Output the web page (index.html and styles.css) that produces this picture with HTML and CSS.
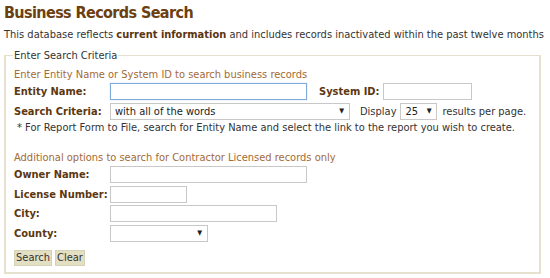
FILE: index.html
```html
<!DOCTYPE html>
<html>
<head>
<meta charset="utf-8">
<link rel="stylesheet" href="styles.css">
</head>
<body>
<div class="page">
  <h1 class="title">Business Records Search</h1>
  <p class="intro">This database reflects <b>current information</b> and includes records inactivated within the past twelve months</p>
  <fieldset class="criteria">
    <legend>Enter Search Criteria</legend>
    <div class="hint">Enter Entity Name or System ID to search business records</div>
    <div class="row">
      <label class="lbl">Entity Name:</label>
      <input class="inp inp-name focus" type="text">
      <label class="lbl lbl-sys">System ID:</label>
      <input class="inp inp-sys" type="text">
    </div>
    <div class="row">
      <label class="lbl">Search Criteria:</label>
      <div class="sel sel-crit"><span>with all of the words</span><i>&#9660;</i></div>
      <span class="display">Display</span>
      <div class="sel sel-num"><span>25</span><i>&#9660;</i></div>
      <span class="per">results per page.</span>
    </div>
    <div class="note">* For Report Form to File, search for Entity Name and select the link to the report you wish to create.</div>
    <div class="hint hint2">Additional options to search for Contractor Licensed records only</div>
    <div class="row">
      <label class="lbl">Owner Name:</label>
      <input class="inp inp-name" type="text">
    </div>
    <div class="row">
      <label class="lbl">License Number:</label>
      <input class="inp inp-lic" type="text">
    </div>
    <div class="row">
      <label class="lbl">City:</label>
      <input class="inp inp-city" type="text">
    </div>
    <div class="row">
      <label class="lbl">County:</label>
      <div class="sel sel-county"><span></span><i>&#9660;</i></div>
    </div>
    <div class="buttons">
      <button class="btn">Search</button><button class="btn">Clear</button>
    </div>
  </fieldset>
</div>
</body>
</html>
```
FILE: styles.css
```css
* { box-sizing: border-box; }
body {
  margin: 0;
  background: #fff;
  font-family: "DejaVu Sans Condensed", "DejaVu Sans", Verdana, sans-serif;
  font-size: 11px;
  color: #333;
}
.page { padding: 3px 4px 0 4px; width: 550px; }
.title {
  margin: 0;
  font-size: 16px;
  font-weight: bold;
  letter-spacing: -0.6px;
  color: #6b3f12;
  line-height: 20px;
  white-space: nowrap;
}
.intro {
  margin: 5px 0 0 0;
  line-height: 14px;
  color: #333;
  white-space: nowrap;
}
.intro b { color: #5a3510; }
.criteria {
  margin: 7px 0 0 0;
  width: 537px;
  border: 2px solid #e6e1cf;
  border-width: 1px 2px 2px 2px;
  padding: 4px 8px 6px 8px;
  min-width: 0;
}
.criteria legend {
  padding: 0 1px;
  margin-left: -1px;
  color: #333;
  line-height: 13px;
}
.hint { color: #a36a36; line-height: 14px; margin-top: 2px; white-space: nowrap; }
.hint2 { margin-top: 16px; }
.row {
  display: flex;
  align-items: center;
  height: 19.5px;
  white-space: nowrap;
}
.lbl {
  width: 96px;
  font-weight: bold;
  color: #5c3710;
  flex: none;
}
.inp {
  height: 17px;
  border: 1px solid #c8c8c8;
  padding: 0 2px;
  background: #fff;
  font: inherit;
  outline: none;
  flex: none;
}
.inp-name { width: 197px; }
.inp-name.focus { border-color: #7ea9d9; box-shadow: 0 0 1px #a8c7ea; }
.inp-sys { width: 89px; }
.lbl-sys { width: auto; margin-left: 12px; margin-right: 3px; }
.inp-lic { width: 77px; }
.inp-city { width: 167px; }
.sel {
  display: flex;
  align-items: center;
  justify-content: space-between;
  height: 17px;
  border: 1px solid #c8c8c8;
  padding: 0 5px 0 4px;
  background: #fff;
  color: #222;
  flex: none;
}
.sel i { font-style: normal; font-size: 7px; color: #222; }
.sel-crit { width: 240px; }
.sel-num { width: 37px; margin: 0 5px 0 4px; }
.sel-county { width: 98px; }
.display { margin-left: 10px; }
.note { margin: 0 0 0 3px; line-height: 14px; white-space: nowrap; }
.buttons { display: flex; gap: 3px; margin-top: 7px; }
.btn {
  font: inherit;
  color: #333;
  background: #e3dfc3;
  border: 1px solid #d6d2b6;
  padding: 0 1px;
  height: 16px;
  line-height: 14px;
}
```
